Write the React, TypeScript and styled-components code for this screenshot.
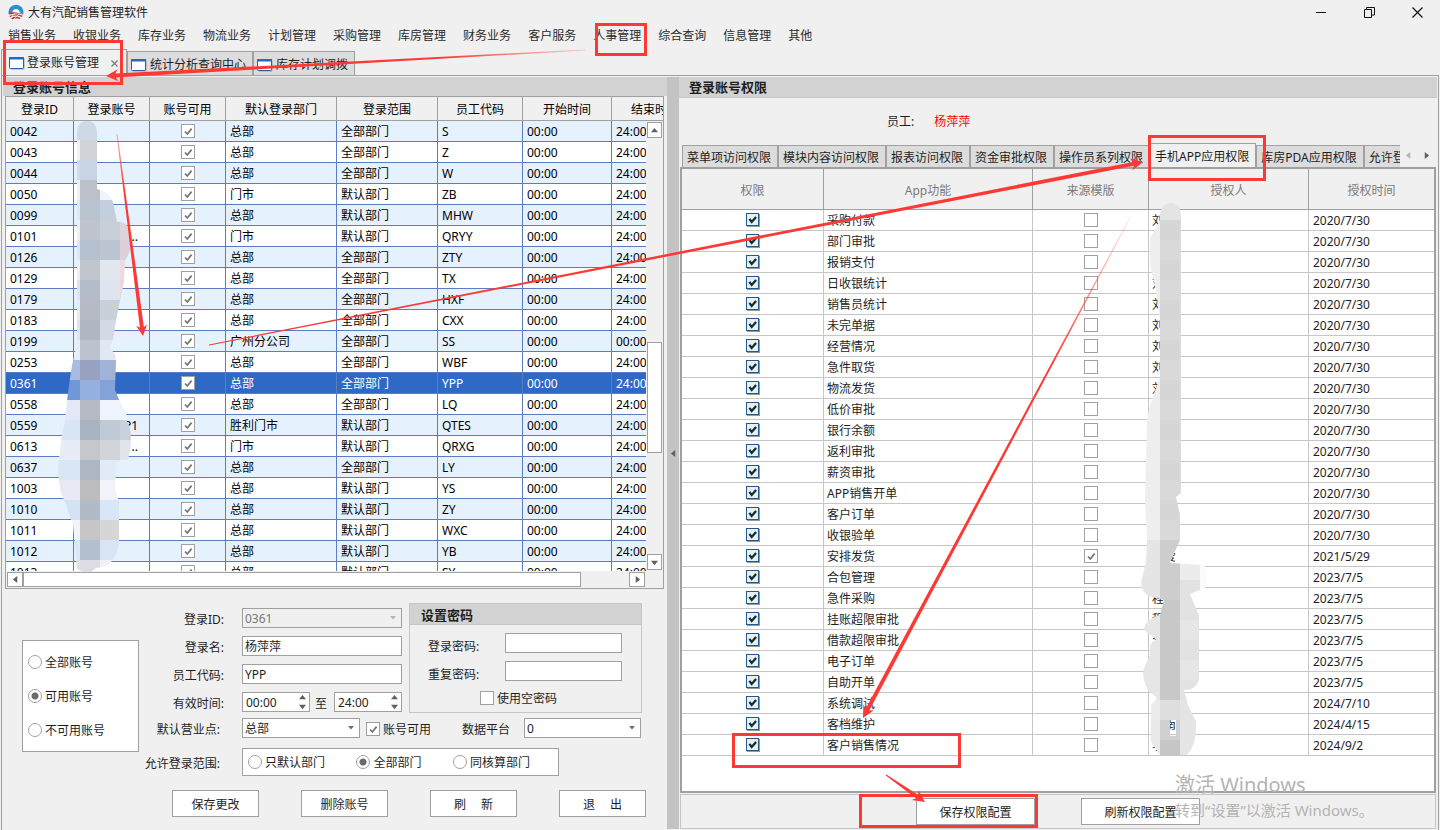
import React from "react";
import styled, { createGlobalStyle, css } from "styled-components";

const LINE = "#a0a0a0";
const SOFT_LINE = "#c6c6c6";
const FACE = "#f0f0f0";
const BAND = "#d2d2d2";
const RED = "#fd3936";

const svgUrl = (body: string, w: number, h: number) =>
  `url("data:image/svg+xml,${encodeURIComponent(
    `<svg xmlns='http://www.w3.org/2000/svg' width='${w}' height='${h}' viewBox='0 0 ${w} ${h}'>${body}</svg>`
  )}")`;

const tickGrey = svgUrl("<path d='M3 6.5L5.3 9L9.6 3.6' fill='none' stroke='#757575' stroke-width='1.7'/>", 12, 12);
const tickDark = svgUrl("<path d='M2.8 5.2L5 8.2L9.2 3.4' fill='none' stroke='#0f2f33' stroke-width='2.2'/>", 12, 12);
const dropArrow = svgUrl("<path d='M0 0h6L3 3.5z' fill='#707070'/>", 6, 4);
const dropArrowOff = svgUrl("<path d='M0 0h6L3 3.5z' fill='#b5b5b5'/>", 6, 4);

const GlobalStyle = createGlobalStyle`
  *, *::before, *::after { box-sizing: border-box; }
  body {
    margin: 0;
    background: ${FACE};
    color: #1e1e1e;
    font: 12px/16px "Noto Sans", "Noto Sans CJK SC", sans-serif;
  }
  button, input, select { font: inherit; color: inherit; margin: 0; border-radius: 0; }
  button { padding: 0; }
`;

const Page = styled.div`
  position: relative;
  display: flex;
  flex-direction: column;
  min-height: 100vh;
  overflow: hidden;
`;

const TitleBar = styled.header`
  display: flex;
  align-items: center;
  gap: 4px;
  height: 24px;
  padding-left: 8px;
`;

const WindowTitle = styled.h1`
  flex: 1;
  margin: 0;
  padding-top: 1px;
  font-size: 12px;
  font-weight: 400;
`;

const WindowButton = styled.button`
  display: flex;
  align-items: center;
  justify-content: center;
  width: 48px;
  height: 24px;
  border: 0;
  background: none;
`;

const WindowButtons = styled.div`
  display: flex;
  margin-right: -1px;
`;

const MenuBar = styled.nav`
  display: flex;
  gap: 17px;
  height: 25px;
  padding: 4px 8px 0;
`;

const MenuItem = styled.a`
  color: #2b2b2b;
  text-decoration: none;
  white-space: nowrap;
`;

const DocTabs = styled.div`
  display: flex;
  align-items: flex-end;
  height: 26px;
  padding-left: 1px;
`;

const DocTab = styled.button<{ $active?: boolean }>`
  display: flex;
  align-items: center;
  gap: 3px;
  height: ${(p) => (p.$active ? 26 : 24)}px;
  padding: 2px 6px 0 3px;
  border: 1px solid ${LINE};
  border-bottom: 0;
  background: ${(p) => (p.$active ? FACE : "#dcdcdc")};
  white-space: nowrap;
  ${(p) => p.$active && css`gap: 2px; padding: 1px 8px 0 7px;`}
`;

const TabClose = styled.span`
  display: flex;
  margin-left: 10px;
`;

const Workspace = styled.main`
  display: flex;
  flex: 1;
  margin: 0 1px;
  padding: 1px;
  border: 1px solid ${LINE};
  border-bottom: 0;
`;

const AccountPane = styled.section`
  display: flex;
  flex: 664 1 0;
  flex-direction: column;
  min-width: 0;
`;

const Splitter = styled.div`
  display: flex;
  align-items: center;
  justify-content: center;
  flex: 0 0 12px;
  background: #c3c3c3;
`;

const RightsPane = styled.section`
  display: flex;
  flex: 758 1 0;
  flex-direction: column;
  min-width: 0;
`;

const PaneTitle = styled.h2<{ $short?: boolean }>`
  height: ${(p) => (p.$short ? 19 : 21)}px;
  margin: 0;
  padding-left: 10px;
  border-bottom: ${(p) => (p.$short ? 0 : 1)}px solid ${SOFT_LINE};
  background: ${BAND};
  font-size: 13px;
  font-weight: 700;
  line-height: 20px;
`;

/* account grid */

const AccountGrid = styled.div`
  display: grid;
  grid-template-columns: 1fr 17px;
  grid-template-rows: 24px 450px 17px;
  margin: 0 3px 0 2px;
  border: 1px solid ${LINE};
`;

const GridViewport = styled.div`
  grid-area: 1 / 1 / 3 / 3;
  overflow: hidden;
  min-width: 0;
`;

const AccountTable = styled.table`
  width: 693px;
  table-layout: fixed;
  border-collapse: separate;
  border-spacing: 0;
`;

const AccountHead = styled.th`
  height: 24px;
  padding: 2px 0 0;
  border-right: 1px solid ${LINE};
  border-bottom: 1px solid ${LINE};
  color: #000;
  font-weight: 400;
`;

const AccountRow = styled.tr<{ $selected?: boolean }>`
  background: #fff;
  color: #000;
  &:nth-child(odd) { background: #e6f1fe; }
  ${(p) => p.$selected && css`&&& { background: #2f69c6; color: #fff; }`}
`;

const AccountCell = styled.td<{ $align?: "center" | "right" }>`
  height: 21px;
  padding: 2px 11px 0 4px;
  border-right: 1px solid #5c7cc6;
  border-bottom: 1px solid #5c7cc6;
  line-height: 16px;
  text-align: ${(p) => p.$align ?? "left"};
  white-space: nowrap;
  ${(p) => p.$align === "center" && css`padding: 0;`}
`;

const VBar = styled.div`
  grid-area: 2 / 2;
  display: flex;
  flex-direction: column;
  padding: 1px;
  background: ${FACE};
`;

const HBar = styled.div`
  grid-area: 3 / 1;
  display: flex;
  padding: 1px 1px 1px 1px;
  background: ${FACE};
`;

const BarButton = styled.button`
  display: flex;
  align-items: center;
  justify-content: center;
  flex: none;
  width: 16px;
  height: 16px;
  border: 1px solid ${LINE};
  background: #fff;
  ${VBar} & { width: 15px; }
  ${HBar} & { height: 15px; }
`;

const VThumb = styled.div`
  height: 111px;
  margin: 204px 0 auto;
  border: 1px solid ${LINE};
  background: #fff;
`;

const HThumb = styled.div`
  flex: 0 1 558px;
  margin-right: auto;
  border: 1px solid ${LINE};
  background: #fff;
`;

/* form controls */

const Check = styled.input.attrs({ type: "checkbox" })<{ $blue?: boolean }>`
  appearance: none;
  display: block;
  flex: none;
  width: 14px;
  height: 14px;
  border: 1px solid ${LINE};
  background: #fff center / 12px no-repeat;
  &:checked { background-image: ${tickGrey}; }
  td & { margin: 0 auto; }
  ${(p) =>
    p.$blue &&
    css`
      width: 13px;
      height: 13px;
      border-color: #225a8f;
      box-shadow: 1px 1px 0 #8d9aa6;
      background-color: #e9eef0;
      &:checked { background-image: ${tickDark}; }
    `}
`;

const Radio = styled.input.attrs({ type: "radio" })`
  appearance: none;
  flex: none;
  width: 14px;
  height: 14px;
  border: 1px solid ${LINE};
  &&& { border-radius: 50%; }
  background: #fff;
  &:checked { background: radial-gradient(circle, #6a6a6a 3px, #fff 4px); }
`;

const Option = styled.label`
  display: flex;
  align-items: center;
  gap: 3px;
  white-space: nowrap;
`;

const OptionText = styled.span`
  padding-top: 2px;
`;

const TextBox = styled.input<{ $w: number }>`
  width: ${(p) => p.$w}px;
  height: 20px;
  padding: 0 2px;
  border: 1px solid ${LINE};
  background: #fff;
`;

const Drop = styled.select<{ $w: number }>`
  appearance: none;
  width: ${(p) => p.$w}px;
  height: 20px;
  padding: 1px 2px 0;
  border: 1px solid ${LINE};
  background: #fff ${dropArrow} right 5px center no-repeat;
  &:disabled {
    background: ${FACE} ${dropArrowOff} right 5px center no-repeat;
    color: #787878;
    opacity: 1;
  }
`;

const SpinFrame = styled.span`
  display: flex;
  width: 68px;
  height: 20px;
  border: 1px solid ${LINE};
  background: #fff;
`;

const SpinInput = styled.input`
  flex: 1;
  min-width: 0;
  padding: 1px 3px 0;
  border: 0;
  background: none;
`;

const SpinArrows = styled.span`
  display: flex;
  flex-direction: column;
  width: 14px;
`;

const SpinButton = styled.button`
  display: flex;
  align-items: center;
  justify-content: center;
  flex: 1;
  border: 0;
  background: none;
`;

const PushButton = styled.button<{ $w?: number }>`
  width: ${(p) => p.$w ?? 87}px;
  height: 27px;
  padding-top: 2px;
  border: 1px solid ${LINE};
  background: #fff;
  white-space: pre;
`;

const AccountForm = styled.form`
  display: flex;
  padding: 14px 0 12px 19px;
`;

const FilterBox = styled.fieldset`
  display: flex;
  flex: none;
  flex-direction: column;
  gap: 16px;
  width: 117px;
  height: 112px;
  margin: 37px 0 0;
  padding: 12px 5px;
  border: 1px solid ${LINE};
  background: #fff;
`;

const Details = styled.div`
  display: flex;
  flex-direction: column;
`;

const TopBlock = styled.div`
  display: flex;
  gap: 7px;
  margin-bottom: 5px;
`;

const Fields = styled.div`
  display: flex;
  flex-direction: column;
  gap: 8px;
  padding-top: 5px;
`;

const FieldRow = styled.div`
  display: flex;
  align-items: center;
  height: 20px;
`;

const FieldLabel = styled.label<{ $wide?: boolean }>`
  width: ${(p) => (p.$wide ? 81 : 85)}px;
  margin-right: ${(p) => (p.$wide ? 22 : 18)}px;
  padding-top: 4px;
  text-align: right;
  white-space: nowrap;
`;

const Joiner = styled.span`
  width: 24px;
  padding: 4px 2px 0 0;
  text-align: center;
`;

const PasswordGroup = styled.fieldset`
  width: 233px;
  height: 110px;
  margin: 0;
  padding: 0;
  border: 1px solid ${SOFT_LINE};
`;

const GroupTitle = styled.div`
  height: 21px;
  padding-left: 11px;
  border-bottom: 1px solid ${SOFT_LINE};
  background: ${BAND};
  font-size: 13px;
  font-weight: 700;
  line-height: 22px;
`;

const GroupBody = styled.div`
  display: flex;
  flex-direction: column;
  gap: 8px;
  padding: 8px 19px 0 18px;
`;

const PasswordRow = styled.div`
  display: flex;
  align-items: center;
  justify-content: space-between;
  height: 20px;
`;

const PasswordLabel = styled.label`
  padding-top: 8px;
`;

const BlankOption = styled(Option)`
  padding-left: 52px;
`;

const PlatformLabel = styled.label`
  margin: 0 14px 0 31px;
  padding-top: 3px;
`;

const EnabledOption = styled(Option)`
  margin-left: 6px;
  padding-top: 2px;
`;

const ScopeBox = styled.div`
  display: flex;
  align-items: center;
  width: 317px;
  height: 28px;
  padding: 0 28px 0 5px;
  justify-content: space-between;
  border: 1px solid ${LINE};
  background: #fff;
`;

const ScopeRow = styled.div`
  display: flex;
  align-items: center;
  margin: 10px 0 14px;
`;

const Actions = styled.div`
  display: flex;
  gap: 42px;
  padding-left: 33px;
`;

/* rights pane */

const EmployeeLine = styled.div`
  display: flex;
  align-items: center;
  gap: 20px;
  height: 45px;
  padding: 2px 0 0 208px;
`;

const EmployeeName = styled.span`
  color: #f00;
`;

const RightsTabs = styled.div`
  position: relative;
  display: flex;
  height: 25px;
  margin: 0 2px -1px 3px;
`;

const TabStrip = styled.div`
  display: flex;
  flex: 1;
  align-items: flex-end;
  min-width: 0;
  overflow: hidden;
`;

const RightsTab = styled.button<{ $active?: boolean }>`
  flex: none;
  height: ${(p) => (p.$active ? 25 : 22)}px;
  margin-bottom: ${(p) => (p.$active ? 0 : 1)}px;
  padding: 2px 6px 0 4px;
  border: 1px solid ${LINE};
  border-bottom-width: ${(p) => (p.$active ? 1 : 0)}px;
  background: ${(p) => (p.$active ? FACE : "#dcdcdc")};
  white-space: nowrap;
`;

const TabScroll = styled.div`
  display: flex;
  flex: 0 0 35px;
`;

const TabScrollButton = styled.button`
  display: flex;
  flex: 1;
  align-items: center;
  justify-content: center;
  border: 0;
  background: none;
`;

const RightsFrame = styled.div`
  flex: 1;
  margin: 0 1px 1px;
  border: 2px solid ${LINE};
  background: #fff;
`;

const RightsTable = styled.table`
  width: 100%;
  table-layout: fixed;
  border-collapse: separate;
  border-spacing: 0;
`;

const RightsHead = styled.th`
  height: 41px;
  padding: 3px 0 0;
  border-right: 1px solid ${LINE};
  border-bottom: 1px solid ${LINE};
  background: ${FACE};
  color: #7b7b7b;
  font-weight: 400;
  &:last-child { border-right: 0; }
`;

const RightsCell = styled.td<{ $check?: boolean }>`
  height: 21px;
  padding: ${(p) => (p.$check ? "0 0 1px" : "2px 4px 0 3px")};
  border-right: 1px solid ${SOFT_LINE};
  border-bottom: 1px solid ${SOFT_LINE};
  line-height: 16px;
  white-space: nowrap;
  &:last-child { border-right: 0; padding-left: 4px; }
`;

const RightsFooter = styled.footer`
  display: flex;
  gap: 46px;
  height: 35px;
  margin: 0 1px;
  padding: 3px 0 0 235px;
  border: 1px solid ${SOFT_LINE};
`;

const Watermark = styled.aside`
  position: absolute;
  right: 62px;
  bottom: 9px;
  width: 203px;
  color: #b4b4b4;
  font-size: 15px;
  line-height: 22px;
  white-space: nowrap;
  pointer-events: none;
`;

const WatermarkTitle = styled.div`
  font-size: 20px;
  line-height: 28px;
`;

const Markup = styled.svg`
  position: absolute;
  top: 0;
  left: 0;
  pointer-events: none;
`;

const menus = ["销售业务", "收银业务", "库存业务", "物流业务", "计划管理", "采购管理", "库房管理", "财务业务", "客户服务", "人事管理", "综合查询", "信息管理", "其他"];

const accountColumns: [string, number][] = [
  ["登录ID", 68], ["登录账号", 76], ["账号可用", 76], ["默认登录部门", 111],
  ["登录范围", 101], ["员工代码", 85], ["开始时间", 89], ["结束时间", 87],
];

const accounts: [string, string, string, string, string, string?][] = [
  ["0042", "", "总部", "全部部门", "S"],
  ["0043", "", "总部", "全部部门", "Z"],
  ["0044", "", "总部", "全部部门", "W"],
  ["0050", "", "门市", "默认部门", "ZB"],
  ["0099", "", "总部", "默认部门", "MHW"],
  ["0101", "..", "门市", "默认部门", "QRYY"],
  ["0126", "", "总部", "全部部门", "ZTY"],
  ["0129", "", "总部", "全部部门", "TX"],
  ["0179", "", "总部", "全部部门", "HXF"],
  ["0183", "", "总部", "全部部门", "CXX"],
  ["0199", "", "广州分公司", "全部部门", "SS", "00:00"],
  ["0253", "", "总部", "全部部门", "WBF"],
  ["0361", "", "总部", "全部部门", "YPP"],
  ["0558", "", "总部", "全部部门", "LQ"],
  ["0559", "P1", "胜利门市", "默认部门", "QTES"],
  ["0613", "..", "门市", "默认部门", "QRXG"],
  ["0637", "", "总部", "全部部门", "LY"],
  ["1003", "", "总部", "默认部门", "YS"],
  ["1010", "", "总部", "默认部门", "ZY"],
  ["1011", "", "总部", "默认部门", "WXC"],
  ["1012", "", "总部", "默认部门", "YB"],
  ["1013", "", "总部", "默认部门", "SY"],
];

const rightsTabs = ["菜单项访问权限", "模块内容访问权限", "报表访问权限", "资金审批权限", "操作员系列权限", "手机APP应用权限", "库房PDA应用权限", "允许登录"];

const rights: [string, string, string?][] = [
  ["采购付款", "2020/7/30", "刘"],
  ["部门审批", "2020/7/30"],
  ["报销支付", "2020/7/30"],
  ["日收银统计", "2020/7/30", "刘"],
  ["销售员统计", "2020/7/30", "刘"],
  ["未完单据", "2020/7/30", "刘"],
  ["经营情况", "2020/7/30", "刘"],
  ["急件取货", "2020/7/30", "刘"],
  ["物流发货", "2020/7/30", "刘"],
  ["低价审批", "2020/7/30"],
  ["银行余额", "2020/7/30"],
  ["返利审批", "2020/7/30"],
  ["薪资审批", "2020/7/30"],
  ["APP销售开单", "2020/7/30"],
  ["客户订单", "2020/7/30"],
  ["收银验单", "2020/7/30"],
  ["安排发货", "2021/5/29", "　爱"],
  ["合包管理", "2023/7/5"],
  ["急件采购", "2023/7/5", "程"],
  ["挂账超限审批", "2023/7/5", "程"],
  ["借款超限审批", "2023/7/5", "李"],
  ["电子订单", "2023/7/5"],
  ["自助开单", "2023/7/5"],
  ["系统调试", "2024/7/10"],
  ["客档维护", "2024/4/15", "　南"],
  ["客户销售情况", "2024/9/2", "李"],
];

const Triangle = ({ dir, color = "#606060" }: { dir: "up" | "down" | "left" | "right"; color?: string }) => {
  const d = { up: "M0 6L4 1L8 6z", down: "M0 2L4 7L8 2z", left: "M6 0L1 4L6 8z", right: "M2 0L7 4L2 8z" }[dir];
  return (
    <svg width="7" height="7" viewBox="0 0 8 8" aria-hidden="true">
      <path d={d} fill={color} />
    </svg>
  );
};

const Logo = () => (
  <svg width="16" height="16" viewBox="0 0 16 16" aria-hidden="true">
    <path d="M.6 9.400A7.500 7.500 0 1 1 15.400 9.400L11.600 8.600A3.600 3.600 0 0 0 4.400 8.400z" fill="#2b8fd0" />
    <path d="M4.600 8.300A3.500 3.500 0 0 1 11.400 8.300z" fill="#fff" />
    <path d="M.6 9.200Q4 7.600 8 8.400T15.400 9.400L15 10.600Q11 9.400 8.600 9.400T1 10.600z" fill="#cf2a2f" />
    <path d="M1.400 12Q6 10 10 10.300L14.600 11.700L14 13Q10 11.300 7 11.600T2.200 13.200z" fill="#cf2a2f" />
    <path d="M3 14Q6 12.400 9 12.400L12.800 14.200L11.500 15Q8.500 13.400 4.600 15.200z" fill="#c9252b" />
    <path d="M11.500 9.500L5.500 15.500M7.500 9L3 13" stroke="#f0f0f0" strokeWidth=".7" />
  </svg>
);

const FormIcon = () => (
  <svg width="16" height="14" viewBox="0 0 16 14" aria-hidden="true">
    <rect x="1.500" y="2" width="14" height="11.500" rx="1" fill="#9aa4ae" />
    <rect x=".5" y="1.500" width="14" height="11" rx="1" fill="#fbfdff" stroke="#26639f" />
    <path d="M0 1h15v2.500H0z" fill="#1f6dbb" />
  </svg>
);

const Spin = ({ id, value }: { id: string; value: string }) => (
  <SpinFrame>
    <SpinInput id={id} aria-label={id} defaultValue={value} />
    <SpinArrows>
      <SpinButton type="button" aria-label="增加"><Triangle dir="up" /></SpinButton>
      <SpinButton type="button" aria-label="减少"><Triangle dir="down" /></SpinButton>
    </SpinArrows>
  </SpinFrame>
);

type PointerProps = {
  id: string;
  from: [number, number];
  to: [number, number];
  thick?: number;
  head?: number;
  fade?: number;
};

/* tapering pointer; `fade` is the opacity at its tail */
const Pointer = ({ id, from, to, thick = 2, head = 12, fade = 1 }: PointerProps) => {
  const dx = to[0] - from[0];
  const dy = to[1] - from[1];
  const len = Math.hypot(dx, dy);
  const ux = dx / len;
  const uy = dy / len;
  const at = (back: number, side: number) => `${to[0] - ux * back - uy * side},${to[1] - uy * back + ux * side}`;
  const points = [
    at(len, 0.5), at(head * 0.8, thick), at(head, head / 2), at(0, 0),
    at(head, -head / 2), at(head * 0.8, -thick), at(len, -0.5),
  ];
  return (
    <>
      <linearGradient id={id} gradientUnits="userSpaceOnUse" x1={from[0]} y1={from[1]} x2={to[0]} y2={to[1]}>
        <stop offset="0" stopColor={RED} stopOpacity={fade} />
        <stop offset=".3" stopColor={RED} />
      </linearGradient>
      <polygon points={points.join(" ")} fill={`url(#${id})`} />
    </>
  );
};

const leftMosaic: string[][] = [
  ["#cdd9e6", "#cfd9e6", "", ""],
  ["#f0f2f7", "#d0d3d8", "", ""],
  ["#cddcec", "#c8d4e3", "", ""],
  ["#eff1f7", "#bcc0c9", "#f0f4fb", ""],
  ["#dfe8f3", "#bac4d1", "#c3cfdd", ""],
  ["#eef0f6", "#bfc4cf", "#c9cfd9", "#dfd3db"],
  ["#dde7f3", "#b6c1cf", "#bcc6d3", "#dccfd8"],
  ["#eceff6", "#c1c5ce", "#e2e7ef", "#efd9e0"],
  ["#dbe5f1", "#b3bcc8", "#dfe4ee", "#f0d5dc"],
  ["#e6eaf2", "#b5bac4", "#c9d0da", "#eed6dd"],
  ["#dbe5f1", "#b0b7c2", "#d4dae5", ""],
  ["#e6edf7", "#bcc3cf", "#e2e8f2", ""],
  ["#a8bce3", "#98a3c2", "#a0b2d6", ""],
  ["#7097d6", "#96b0e0", "#84a1da", "#84a1da"],
  ["#e2e8f5", "#b5bac4", "#eff3fc", "#eff3fc"],
  ["#d8e5f5", "#a9b4c3", "#c0c9d6", "#c9d1de"],
  ["#e7ecf6", "#c6c7ca", "#d2d4da", "#dfe4ed"],
  ["#d8e6f6", "#adb7c4", "#e1eaf7", "#eef2fa"],
  ["#e7eaf5", "#bcbcbf", "#f1f3f9", ""],
  ["#d4e3f4", "#b1bbc8", "#d9e6f6", ""],
  ["#f3f4fa", "#c6c6c6", "#d6d6d7", ""],
  ["#dae7f6", "#b3bfcc", "#d8e5f5", ""],
  ["#dfe1e9", "#dcdde2", "#eff1f8", ""],
];

const rightMosaic = (y: number): string[] => {
  if (y < 220) return ["#efefef", "#e4e4e4", "#e4e4e4", ""];
  if (y < 540) return ["#eeeeee", y % 40 ? "#d6d6d6" : "#d9d9d9", "#dcdcdc", ""];
  if (y < 600) return ["#e5e5e5", "#cdcdcd", y < 580 ? "#ececec" : "#e2e2e2", "#fbfbfb"];
  if (y < 700) return ["#e6e6e6", "#c8c8c8", y % 40 ? "#e6e6e6" : "#e2e2e2", ""];
  if (y < 720) return ["#ececec", "#dedede", "#e4e4e4", ""];
  return ["#e8e8e8", y < 740 ? "#d0d0d0" : "#c6c6c6", "#e5e5e5", ""];
};

const Overlay = () => (
  <Markup width="1440" height="830" viewBox="0 0 1440 830" aria-hidden="true">
    <clipPath id="hide-left">
      <path d="M77 131Q78 121 87 121T97 131V189Q109 191 113 202L117 222Q128 220 130 236Q132 252 125 260L124 282L117 315L113 340L109 349Q116 352 116 360L115 390L120 402L126 412L127 421Q131 428 131 440T127 461L116 463L115 490L119 502V540Q118 560 104 567L96 568Q88 576 77 569L75 545L73 525L66 505L60 490L58 470L61 440L65 420L68 392L72 365L77 345z" />
    </clipPath>
    <g clipPath="url(#hide-left)" shapeRendering="crispEdges">
      {leftMosaic.map((row, r) =>
        row.map((c, i) => c && <rect key={`${r}-${i}`} x={[50, 80, 100, 120][i]} y={120 + r * 20} width={i ? 20 : 30} height="20" fill={c} />)
      )}
    </g>
    <clipPath id="hide-right">
      <path clipRule="evenodd" d="M1160 214Q1162 203 1171 203T1181 214V493L1176 497L1180 515V540L1170 563L1204 565Q1210 574 1205 588L1190 594L1199 615V680Q1196 690 1184 690L1188 705L1196 722Q1197 745 1187 755H1160L1151 742V705L1157 698L1148 690Q1141 677 1144 668L1150 655V645L1156 639L1144 630Q1144 620 1160 615L1164 600L1148 596Q1139 588 1142 578L1146 562L1147 540L1145 500L1147 420L1150 405L1160 377V320L1156 290L1150 265V238L1160 220zM1170 720h6v16h-6z" />
    </clipPath>
    <g clipPath="url(#hide-right)" shapeRendering="crispEdges">
      {Array.from({ length: 28 }, (_, r) => 200 + r * 20).map((y) =>
        rightMosaic(y).map((c, i) => c && <rect key={`${y}-${i}`} x={1140 + i * 20} y={y} width="20" height="20" fill={c} />)
      )}
    </g>
    <g fill="none" stroke={RED} strokeWidth="3">
      <rect x="4.500" y="41.500" width="117" height="42" />
      <rect x="596.500" y="24.500" width="49" height="30" />
      <rect x="1149.500" y="136.500" width="115" height="43" />
      <rect x="733.500" y="734.500" width="226" height="32" />
      <rect x="860.500" y="795.500" width="176" height="31" />
    </g>
    <Pointer id="to-tab" from={[585, 50]} to={[106, 76]} fade={0.2} />
    <Pointer id="to-row" from={[117, 134]} to={[143, 336]} head={11} fade={0.4} />
    <Pointer id="to-app" from={[209, 345]} to={[1143, 162]} />
    <Pointer id="to-item" from={[1131, 216]} to={[863, 718]} fade={0.1} />
    <Pointer id="to-save" from={[886, 775]} to={[925, 802]} />
  </Markup>
);

export default function App() {
  return (
    <Page>
      <GlobalStyle />
      <TitleBar>
        <Logo />
        <WindowTitle>大有汽配销售管理软件</WindowTitle>
        <WindowButtons>
          <WindowButton aria-label="最小化">
            <svg width="11" height="11" viewBox="0 0 11 11"><path d="M0 5.500h10" stroke="#111" /></svg>
          </WindowButton>
          <WindowButton aria-label="还原">
            <svg width="11" height="11" viewBox="0 0 11 11" fill="none" stroke="#111"><path d="M.5 2.500h7v8h-7zM2.500 2.500v-2h8v7.500h-3" /></svg>
          </WindowButton>
          <WindowButton aria-label="关闭">
            <svg width="11" height="11" viewBox="0 0 11 11"><path d="M.5.5l10 10M10.500.5l-10 10" stroke="#111" strokeWidth="1.200" /></svg>
          </WindowButton>
        </WindowButtons>
      </TitleBar>
      <MenuBar>
        {menus.map((m) => <MenuItem key={m} href="#">{m}</MenuItem>)}
      </MenuBar>
      <DocTabs>
        <DocTab $active>
          <FormIcon />
          登录账号管理
          <TabClose>
            <svg width="7" height="7" viewBox="0 0 7 7"><path d="M.5.5l6 6M6.500.5l-6 6" stroke="#777" strokeWidth="1.200" /></svg>
          </TabClose>
        </DocTab>
        <DocTab><FormIcon />统计分析查询中心</DocTab>
        <DocTab><FormIcon />库存计划调拨</DocTab>
      </DocTabs>

      <Workspace>
        <AccountPane>
          <PaneTitle $short>登录账号信息</PaneTitle>
          <AccountGrid>
            <GridViewport>
              <AccountTable>
                <colgroup>{accountColumns.map(([n, w]) => <col key={n} width={w} />)}</colgroup>
                <thead>
                  <tr>{accountColumns.map(([n]) => <AccountHead key={n}>{n}</AccountHead>)}</tr>
                </thead>
                <tbody>
                  {accounts.map(([id, login, dept, scope, code, end]) => (
                    <AccountRow key={id} $selected={id === "0361"}>
                      <AccountCell>{id}</AccountCell>
                      <AccountCell $align="right">{login}</AccountCell>
                      <AccountCell $align="center"><Check defaultChecked aria-label={`${id} 账号可用`} /></AccountCell>
                      <AccountCell>{dept}</AccountCell>
                      <AccountCell>{scope}</AccountCell>
                      <AccountCell>{code}</AccountCell>
                      <AccountCell>00:00</AccountCell>
                      <AccountCell>{end ?? "24:00"}</AccountCell>
                    </AccountRow>
                  ))}
                </tbody>
              </AccountTable>
            </GridViewport>
            <VBar>
              <BarButton aria-label="向上"><Triangle dir="up" /></BarButton>
              <VThumb />
              <BarButton aria-label="向下"><Triangle dir="down" /></BarButton>
            </VBar>
            <HBar>
              <BarButton aria-label="向左"><Triangle dir="left" /></BarButton>
              <HThumb />
              <BarButton aria-label="向右"><Triangle dir="right" /></BarButton>
            </HBar>
          </AccountGrid>

          <AccountForm>
            <FilterBox>
              <Option><Radio name="filter" /><OptionText>全部账号</OptionText></Option>
              <Option><Radio name="filter" defaultChecked /><OptionText>可用账号</OptionText></Option>
              <Option><Radio name="filter" /><OptionText>不可用账号</OptionText></Option>
            </FilterBox>
            <Details>
              <TopBlock>
                <Fields>
                  <FieldRow>
                    <FieldLabel htmlFor="login-id">登录ID:</FieldLabel>
                    <Drop id="login-id" $w={160} disabled><option>0361</option></Drop>
                  </FieldRow>
                  <FieldRow>
                    <FieldLabel htmlFor="login-name">登录名:</FieldLabel>
                    <TextBox id="login-name" $w={160} defaultValue="杨萍萍" />
                  </FieldRow>
                  <FieldRow>
                    <FieldLabel htmlFor="staff-code">员工代码:</FieldLabel>
                    <TextBox id="staff-code" $w={160} defaultValue="YPP" />
                  </FieldRow>
                  <FieldRow>
                    <FieldLabel htmlFor="time-from">有效时间:</FieldLabel>
                    <Spin id="time-from" value="00:00" />
                    <Joiner>至</Joiner>
                    <Spin id="time-to" value="24:00" />
                  </FieldRow>
                </Fields>
                <PasswordGroup>
                  <GroupTitle>设置密码</GroupTitle>
                  <GroupBody>
                    <PasswordRow>
                      <PasswordLabel htmlFor="pw">登录密码:</PasswordLabel>
                      <TextBox id="pw" type="password" $w={117} />
                    </PasswordRow>
                    <PasswordRow>
                      <PasswordLabel htmlFor="pw2">重复密码:</PasswordLabel>
                      <TextBox id="pw2" type="password" $w={117} />
                    </PasswordRow>
                    <BlankOption><Check /><OptionText>使用空密码</OptionText></BlankOption>
                  </GroupBody>
                </PasswordGroup>
              </TopBlock>
              <FieldRow>
                <FieldLabel $wide htmlFor="branch">默认营业点:</FieldLabel>
                <Drop id="branch" $w={118}><option>总部</option></Drop>
                <EnabledOption><Check defaultChecked /><OptionText>账号可用</OptionText></EnabledOption>
                <PlatformLabel htmlFor="platform">数据平台</PlatformLabel>
                <Drop id="platform" $w={117}><option>0</option></Drop>
              </FieldRow>
              <ScopeRow>
                <FieldLabel $wide as="span">允许登录范围:</FieldLabel>
                <ScopeBox>
                  <Option><Radio name="scope" /><OptionText>只默认部门</OptionText></Option>
                  <Option><Radio name="scope" defaultChecked /><OptionText>全部部门</OptionText></Option>
                  <Option><Radio name="scope" /><OptionText>同核算部门</OptionText></Option>
                </ScopeBox>
              </ScopeRow>
              <Actions>
                <PushButton type="button">保存更改</PushButton>
                <PushButton type="button">删除账号</PushButton>
                <PushButton type="button">{"刷　 新"}</PushButton>
                <PushButton type="button">{"退　 出"}</PushButton>
              </Actions>
            </Details>
          </AccountForm>
        </AccountPane>

        <Splitter><Triangle dir="left" /></Splitter>

        <RightsPane>
          <PaneTitle>登录账号权限</PaneTitle>
          <EmployeeLine>
            <span>员工:</span>
            <EmployeeName>杨萍萍</EmployeeName>
          </EmployeeLine>
          <RightsTabs>
            <TabStrip>
              {rightsTabs.map((t, i) => <RightsTab key={t} $active={i === 5}>{t}</RightsTab>)}
            </TabStrip>
            <TabScroll>
              <TabScrollButton aria-label="上一组"><Triangle dir="left" color="#b5b5b5" /></TabScrollButton>
              <TabScrollButton aria-label="下一组"><Triangle dir="right" /></TabScrollButton>
            </TabScroll>
          </RightsTabs>
          <RightsFrame>
            <RightsTable>
              <colgroup>
                <col width={142} />
                <col width={209} />
                <col width={116} />
                <col width={160} />
                <col />
              </colgroup>
              <thead>
                <tr>
                  {["权限", "App功能", "来源模版", "授权人", "授权时间"].map((h) => <RightsHead key={h}>{h}</RightsHead>)}
                </tr>
              </thead>
              <tbody>
                {rights.map(([name, date, by]) => (
                  <tr key={name}>
                    <RightsCell $check><Check $blue defaultChecked aria-label={`${name} 权限`} /></RightsCell>
                    <RightsCell>{name}</RightsCell>
                    <RightsCell $check><Check defaultChecked={name === "安排发货"} aria-label={`${name} 来源模版`} /></RightsCell>
                    <RightsCell>{by}</RightsCell>
                    <RightsCell>{date}</RightsCell>
                  </tr>
                ))}
              </tbody>
            </RightsTable>
          </RightsFrame>
          <RightsFooter>
            <PushButton $w={119} type="button">保存权限配置</PushButton>
            <PushButton $w={119} type="button">刷新权限配置</PushButton>
          </RightsFooter>
        </RightsPane>
      </Workspace>

      <Watermark>
        <WatermarkTitle>激活 Windows</WatermarkTitle>
        转到“设置”以激活 Windows。
      </Watermark>
      <Overlay />
    </Page>
  );
}
